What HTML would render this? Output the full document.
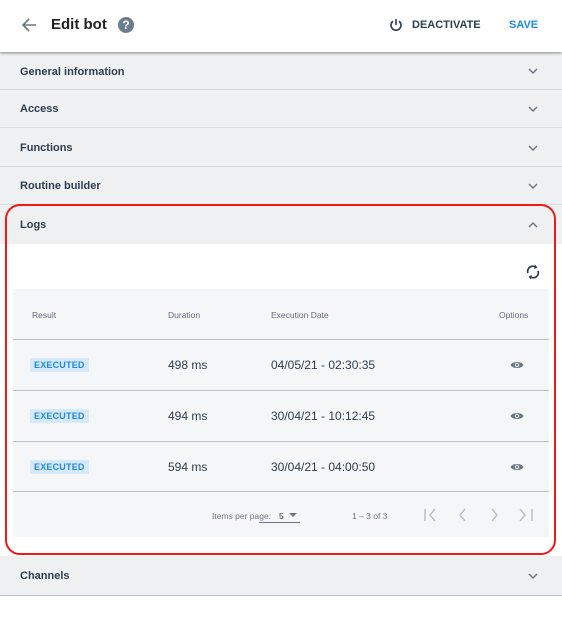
<!DOCTYPE html>
<html><head><style>
*{margin:0;padding:0;box-sizing:border-box}
body{width:562px;height:630px;background:#fff;font-family:"Liberation Sans",Arial,sans-serif;position:relative;overflow:hidden;color:#2b3a4a}
.hdr{position:absolute;left:0;top:0;width:562px;height:52px;background:#fff;box-shadow:0 1px 3px rgba(0,0,0,.45);z-index:2}
.sec{position:absolute;left:0;width:562px;background:#eff0f2;border-bottom:1px solid #d8dbe0;font-size:11px;font-weight:bold;color:#2c3e50}
.sec span{position:absolute;left:20px}
.chev{position:absolute;left:528px}
.abs{position:absolute}
.th{position:absolute;font-size:8.5px;color:#5f6f80}
.row{position:absolute;left:13px;width:536px;height:51px;border-top:1px solid #b8c0c8}
.badge{position:absolute;left:17px;background:#d6e9f8;color:#1e88e5;font-size:9px;font-weight:bold;padding:2px 4px;top:18px;letter-spacing:.2px}
.dur{position:absolute;left:155px;top:18px;font-size:12px;color:#2c3e50}
.dt{position:absolute;left:258px;top:18px;font-size:12px;color:#2c3e50}
.eye{position:absolute;left:497px;top:20px}
</style></head><body>
<div class="hdr">
<svg class="abs" style="left:21px;top:17px" width="16" height="16" viewBox="0 0 16 16"><path d="M15 8H2M8 2L2 8l6 6" stroke="#6b7785" stroke-width="1.6" fill="none"/></svg>
<div class="abs" style="left:51px;top:16px;font-size:15px;font-weight:bold;color:#222">Edit bot</div>
<div class="abs" style="left:118px;top:17px;width:16px;height:16px;border-radius:50%;background:#6b7d8f;color:#fff;font-size:12px;font-weight:bold;text-align:center;line-height:16px">?</div>
<svg class="abs" style="left:389px;top:18px" width="14" height="14" viewBox="0 0 14 14"><path d="M7 1v6" stroke="#2c3e50" stroke-width="1.6"/><path d="M4 3.2A5 5 0 1 0 10 3.2" stroke="#2c3e50" stroke-width="1.6" fill="none"/></svg>
<div class="abs" style="left:412px;top:19px;font-size:11px;font-weight:bold;color:#2c3e50">DEACTIVATE</div>
<div class="abs" style="left:509px;top:19px;font-size:11px;font-weight:bold;color:#1e88e5">SAVE</div>
</div>
<div class="sec" style="top:52px;height:38px"><span style="top:14px">General information</span><svg class="chev" style="top:15px" width="10" height="8"><path d="M1 2l4 4 4-4" stroke="#6b7785" stroke-width="1.5" fill="none"/></svg></div>
<div class="sec" style="top:90px;height:38px"><span style="top:13px">Access</span><svg class="chev" style="top:15px" width="10" height="8"><path d="M1 2l4 4 4-4" stroke="#6b7785" stroke-width="1.5" fill="none"/></svg></div>
<div class="sec" style="top:128px;height:39px"><span style="top:14px">Functions</span><svg class="chev" style="top:16px" width="10" height="8"><path d="M1 2l4 4 4-4" stroke="#6b7785" stroke-width="1.5" fill="none"/></svg></div>
<div class="sec" style="top:167px;height:38px"><span style="top:13px">Routine builder</span><svg class="chev" style="top:15px" width="10" height="8"><path d="M1 2l4 4 4-4" stroke="#6b7785" stroke-width="1.5" fill="none"/></svg></div>
<div class="sec" style="top:205px;height:39px;border-bottom:none"><span style="top:14px">Logs</span><svg class="chev" style="top:16px" width="10" height="8"><path d="M1 6l4-4 4 4" stroke="#6b7785" stroke-width="1.5" fill="none"/></svg></div>
<svg class="abs" style="left:525px;top:263px" width="16" height="18" viewBox="0 0 16 18"><path d="M3 10A5 5 0 0 1 11 4.5" stroke="#2c3e50" stroke-width="1.8" fill="none"/><path d="M10 1.5l2.5 3-3.5 1.5z" fill="#2c3e50"/><path d="M13 8A5 5 0 0 1 5 13.5" stroke="#2c3e50" stroke-width="1.8" fill="none"/><path d="M6 16.5l-2.5-3 3.5-1.5z" fill="#2c3e50"/></svg>
<div class="abs" style="left:13px;top:289px;width:536px;height:248px;background:#f5f6f8"></div>
<div class="th" style="left:32px;top:310px">Result</div>
<div class="th" style="left:168px;top:310px">Duration</div>
<div class="th" style="left:271px;top:310px">Execution Date</div>
<div class="th" style="left:499px;top:310px">Options</div>
<div class="row" style="top:339px"><div class="badge">EXECUTED</div><div class="dur">498 ms</div><div class="dt">04/05/21 - 02:30:35</div><svg class="eye" width="14" height="10" viewBox="0 0 14 10"><path d="M0.5 5C2.5 1 11.5 1 13.5 5 11.5 9 2.5 9 .5 5z" fill="#6b7785"/><circle cx="7" cy="5" r="2.2" fill="#f5f6f8"/><circle cx="7" cy="5" r="1.2" fill="#6b7785"/></svg></div>
<div class="row" style="top:390px"><div class="badge">EXECUTED</div><div class="dur">494 ms</div><div class="dt">30/04/21 - 10:12:45</div><svg class="eye" width="14" height="10" viewBox="0 0 14 10"><path d="M0.5 5C2.5 1 11.5 1 13.5 5 11.5 9 2.5 9 .5 5z" fill="#6b7785"/><circle cx="7" cy="5" r="2.2" fill="#f5f6f8"/><circle cx="7" cy="5" r="1.2" fill="#6b7785"/></svg></div>
<div class="row" style="top:441px;border-bottom:1px solid #b8c0c8"><div class="badge">EXECUTED</div><div class="dur">594 ms</div><div class="dt">30/04/21 - 04:00:50</div><svg class="eye" width="14" height="10" viewBox="0 0 14 10"><path d="M0.5 5C2.5 1 11.5 1 13.5 5 11.5 9 2.5 9 .5 5z" fill="#6b7785"/><circle cx="7" cy="5" r="2.2" fill="#f5f6f8"/><circle cx="7" cy="5" r="1.2" fill="#6b7785"/></svg></div>
<div class="abs" style="left:212px;top:511px;font-size:8.5px;color:#6b7785">Items per page:</div>
<div class="abs" style="left:259px;top:503px;width:41px;height:20px;border-bottom:1px solid #6b7785"></div>
<div class="abs" style="left:279px;top:511px;font-size:8.5px;color:#2c3e50">5</div>
<svg class="abs" style="left:289px;top:513px" width="8" height="5"><path d="M0 0h8L4 4z" fill="#6b7785"/></svg>
<div class="abs" style="left:352px;top:511px;font-size:8.5px;color:#6b7785">1 – 3 of 3</div>
<svg class="abs" style="left:423px;top:507px" width="116" height="16" viewBox="0 0 116 16"><g stroke="#b8c0c8" stroke-width="1.5" fill="none"><path d="M2 2v12M12 2L7 8l5 6"/><path d="M42 2l-5 6 5 6"/><path d="M69 2l5 6-5 6"/><path d="M97 2l5 6-5 6M109 2v12"/></g></svg>
<div class="abs" style="left:5px;top:204px;width:551px;height:351px;border:2px solid #f01818;border-radius:15px"></div>
<div class="sec" style="top:556px;height:40px;border-bottom:1px solid #b8c0c8"><span style="top:14px">Channels</span><svg class="chev" style="top:16px" width="10" height="8"><path d="M1 2l4 4 4-4" stroke="#6b7785" stroke-width="1.5" fill="none"/></svg></div>
</body></html>
